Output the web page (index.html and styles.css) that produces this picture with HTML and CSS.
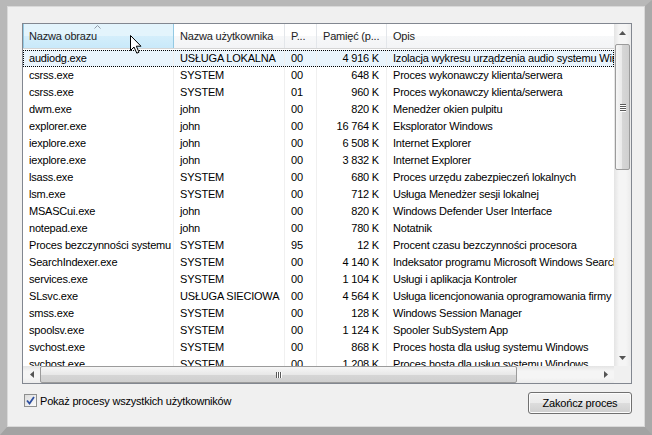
FILE: index.html
```html
<!DOCTYPE html>
<html lang="pl">
<head>
<meta charset="utf-8">
<title>Procesy</title>
<link rel="stylesheet" href="styles.css">
</head>
<body>
<div class="window">
  <div class="pane">
    <div class="listview">
      <div class="viewport">
        <div class="header">
          <div class="hcell hot">Nazwa obrazu<svg class="sort" width="7" height="4" viewBox="0 0 7 4"><path d="M0.5 3.5 L3.5 0.5 L6.5 3.5" fill="none" stroke="#8f9aa8" stroke-width="1"/></svg></div>
          <div class="hcell">Nazwa użytkownika</div>
          <div class="hcell">P...</div>
          <div class="hcell">Pamięć (p...</div>
          <div class="hcell">Opis</div>
        </div>
        <div class="rows">
          <div class="row selected"><span>audiodg.exe</span><span>USŁUGA LOKALNA</span><span>00</span><span class="num">4 916 K</span><span>Izolacja wykresu urządzenia audio systemu Windows</span></div>
          <div class="row"><span>csrss.exe</span><span>SYSTEM</span><span>00</span><span class="num">648 K</span><span>Proces wykonawczy klienta/serwera</span></div>
          <div class="row"><span>csrss.exe</span><span>SYSTEM</span><span>01</span><span class="num">960 K</span><span>Proces wykonawczy klienta/serwera</span></div>
          <div class="row"><span>dwm.exe</span><span>john</span><span>00</span><span class="num">820 K</span><span>Menedżer okien pulpitu</span></div>
          <div class="row"><span>explorer.exe</span><span>john</span><span>00</span><span class="num">16 764 K</span><span>Eksplorator Windows</span></div>
          <div class="row"><span>iexplore.exe</span><span>john</span><span>00</span><span class="num">6 508 K</span><span>Internet Explorer</span></div>
          <div class="row"><span>iexplore.exe</span><span>john</span><span>00</span><span class="num">3 832 K</span><span>Internet Explorer</span></div>
          <div class="row"><span>lsass.exe</span><span>SYSTEM</span><span>00</span><span class="num">680 K</span><span>Proces urzędu zabezpieczeń lokalnych</span></div>
          <div class="row"><span>lsm.exe</span><span>SYSTEM</span><span>00</span><span class="num">712 K</span><span>Usługa Menedżer sesji lokalnej</span></div>
          <div class="row"><span>MSASCui.exe</span><span>john</span><span>00</span><span class="num">820 K</span><span>Windows Defender User Interface</span></div>
          <div class="row"><span>notepad.exe</span><span>john</span><span>00</span><span class="num">780 K</span><span>Notatnik</span></div>
          <div class="row"><span>Proces bezczynności systemu</span><span>SYSTEM</span><span>95</span><span class="num">12 K</span><span>Procent czasu bezczynności procesora</span></div>
          <div class="row"><span>SearchIndexer.exe</span><span>SYSTEM</span><span>00</span><span class="num">4 140 K</span><span>Indeksator programu Microsoft Windows Search</span></div>
          <div class="row"><span>services.exe</span><span>SYSTEM</span><span>00</span><span class="num">1 104 K</span><span>Usługi i aplikacja Kontroler</span></div>
          <div class="row"><span>SLsvc.exe</span><span>USŁUGA SIECIOWA</span><span>00</span><span class="num">4 564 K</span><span>Usługa licencjonowania oprogramowania firmy Microsoft</span></div>
          <div class="row"><span>smss.exe</span><span>SYSTEM</span><span>00</span><span class="num">128 K</span><span>Windows Session Manager</span></div>
          <div class="row"><span>spoolsv.exe</span><span>SYSTEM</span><span>00</span><span class="num">1 124 K</span><span>Spooler SubSystem App</span></div>
          <div class="row"><span>svchost.exe</span><span>SYSTEM</span><span>00</span><span class="num">868 K</span><span>Proces hosta dla usług systemu Windows</span></div>
          <div class="row"><span>svchost.exe</span><span>SYSTEM</span><span>00</span><span class="num">1 208 K</span><span>Proces hosta dla usług systemu Windows</span></div>
        </div>
      </div>
      <div class="vscroll">
        <div class="arrow"><svg width="7" height="4" viewBox="0 0 7 4"><path d="M0 4 L3.5 0 L7 4 Z" fill="#555"/></svg></div>
        <div class="vtrack">
          <div class="vthumb"><span class="grip-h"></span><span class="grip-h"></span><span class="grip-h"></span><span class="grip-h"></span></div>
        </div>
        <div class="arrow"><svg width="7" height="4" viewBox="0 0 7 4"><path d="M0 0 L3.5 4 L7 0 Z" fill="#555"/></svg></div>
      </div>
      <div class="hscroll">
        <div class="arrow"><svg width="4" height="7" viewBox="0 0 4 7"><path d="M4 0 L0 3.5 L4 7 Z" fill="#555"/></svg></div>
        <div class="htrack">
          <div class="hthumb"><span class="grip-v"></span><span class="grip-v"></span><span class="grip-v"></span></div>
        </div>
        <div class="arrow"><svg width="4" height="7" viewBox="0 0 4 7"><path d="M0 0 L4 3.5 L0 7 Z" fill="#555"/></svg></div>
      </div>
      <div class="corner"></div>
    </div>
    <div class="footer">
      <label class="check">
        <span class="box"><svg width="9" height="9" viewBox="0 0 9 9"><path d="M1 4.5 L3.5 7.5 L8 1" fill="none" stroke="#2d4fa0" stroke-width="1.8"/></svg></span>
        Pokaż procesy wszystkich użytkowników
      </label>
      <button class="btn">Zakończ proces</button>
    </div>
  </div>
  <svg class="cursor" width="13" height="20" viewBox="0 0 13 20"><path d="M0.5 0.5 L0.5 15.5 L4 12 L6.8 18.2 L9 17.2 L6.3 11.2 L11 11.2 Z" fill="#fff" stroke="#000" stroke-width="1" stroke-linejoin="round"/></svg>
</div>
</body>
</html>
```

FILE: styles.css
```css
html, body {
  margin: 0;
  padding: 0;
  background: #f0f0f0;
}
body {
  font-family: "Liberation Sans", Tahoma, Arial, sans-serif;
  font-size: 11px;
  letter-spacing: -0.2px;
  color: #000;
}
.window {
  position: relative;
  width: 652px;
  height: 435px;
  box-sizing: border-box;
  border-style: solid;
  border-width: 6px 7px 8px 7px;
  border-color: #b8b8b8 #a9a9a9 #a3a3a3 #b8b8b8;
  background: #f0f0f0;
  box-shadow: inset 1px 1px 0 #d9d9d9, inset -1px -1px 0 #d9d9d9;
}
.pane {
  display: flex;
  flex-direction: column;
  padding: 17px 13px 0 15px;
}
.listview {
  height: 361px;
  box-sizing: border-box;
  border: 1px solid #828790;
  background: #fff;
  display: grid;
  grid-template-columns: 1fr 17px;
  grid-template-rows: 1fr 17px;
}
.viewport {
  overflow: hidden;
  min-width: 0;
}
.header {
  display: grid;
  grid-template-columns: 151px 111px 32px 70px 300px;
  height: 25px;
  box-sizing: border-box;
  border-bottom: 1px solid #d5d5d5;
  background: linear-gradient(#ffffff, #ffffff 50%, #f7f8f9 50%, #f3f4f6);
}
.hcell {
  position: relative;
  padding: 0 6px;
  line-height: 24px;
  white-space: nowrap;
  overflow: hidden;
  border-right: 1px solid #e3e6ea;
  color: #222;
}
.hcell.hot {
  background: linear-gradient(#e3f4fc, #e3f4fc 50%, #d4eefb 50%, #c9e9fa);
  border-right: 1px solid #93c9e3;
  box-shadow: inset 1px 0 0 #93c9e3;
}
.sort {
  position: absolute;
  left: 71px;
  top: 1px;
}
.rows {
  display: flex;
  flex-direction: column;
  padding-top: 1px;
}
.row {
  display: grid;
  grid-template-columns: 151px 111px 32px 70px 300px;
  height: 17px;
  line-height: 17px;
  white-space: nowrap;
  box-sizing: border-box;
}
.row span {
  padding: 0 6px;
  overflow: hidden;
  border-right: 1px solid #f0f0f0;
}
.row span.num {
  text-align: right;
  padding-right: 7px;
}
.row.selected {
  background: #e9f4fc;
  outline: 1px dotted #000;
  outline-offset: -1px;
}
.vscroll {
  display: flex;
  flex-direction: column;
  background: linear-gradient(90deg, #e4e4e4, #f5f5f5 30%, #f5f5f5 70%, #ebebeb);
}
.hscroll {
  display: flex;
  flex-direction: row;
  background: linear-gradient(#e4e4e4, #f5f5f5 30%, #f5f5f5 70%, #ebebeb);
}
.arrow {
  width: 17px;
  height: 17px;
  flex: none;
  display: flex;
  align-items: center;
  justify-content: center;
}
.vtrack {
  flex: 1;
  padding-top: 3px;
}
.vthumb {
  height: 126px;
  margin: 0 1px;
  box-sizing: border-box;
  border: 1px solid #9b9b9b;
  border-radius: 2px;
  background: linear-gradient(90deg, #f6f6f6, #e8e8e8 50%, #d6d6d6 50%, #cfcfcf);
  display: flex;
  flex-direction: column;
  align-items: center;
  justify-content: center;
  gap: 1px;
}
.grip-h {
  width: 6px;
  height: 1px;
  background: #5a5a5a;
  box-shadow: 0 1px 0 #fff;
}
.htrack {
  flex: 1;
}
.hthumb {
  width: 477px;
  height: 17px;
  box-sizing: border-box;
  border: 1px solid #9b9b9b;
  border-radius: 2px;
  background: linear-gradient(#f6f6f6, #e8e8e8 50%, #d6d6d6 50%, #cfcfcf);
  display: flex;
  align-items: center;
  justify-content: center;
  gap: 1px;
}
.grip-v {
  width: 1px;
  height: 6px;
  background: #5a5a5a;
  box-shadow: 1px 0 0 #fff;
}
.corner {
  background: #f0f0f0;
}
.footer {
  display: flex;
  justify-content: space-between;
  align-items: flex-start;
  margin-top: 8px;
  padding-left: 2px;
}
.check {
  display: flex;
  align-items: center;
  gap: 3px;
  margin-top: 2px;
  color: #000;
}
.box {
  width: 13px;
  height: 13px;
  box-sizing: border-box;
  border: 1px solid #8e8f8f;
  background: linear-gradient(135deg, #dcdcdc, #fbfbfb);
  display: flex;
  align-items: center;
  justify-content: center;
}
.btn {
  width: 104px;
  height: 22px;
  margin: 0;
  padding: 0;
  font-family: inherit;
  font-size: 11px;
  letter-spacing: -0.2px;
  color: #000;
  border: 1px solid #707070;
  border-radius: 3px;
  background: linear-gradient(#f2f2f2, #ebebeb 50%, #dddddd 50%, #cfcfcf);
  box-shadow: inset 0 0 0 1px #fcfcfc;
}
.cursor {
  position: absolute;
  left: 123px;
  top: 29px;
}
```
